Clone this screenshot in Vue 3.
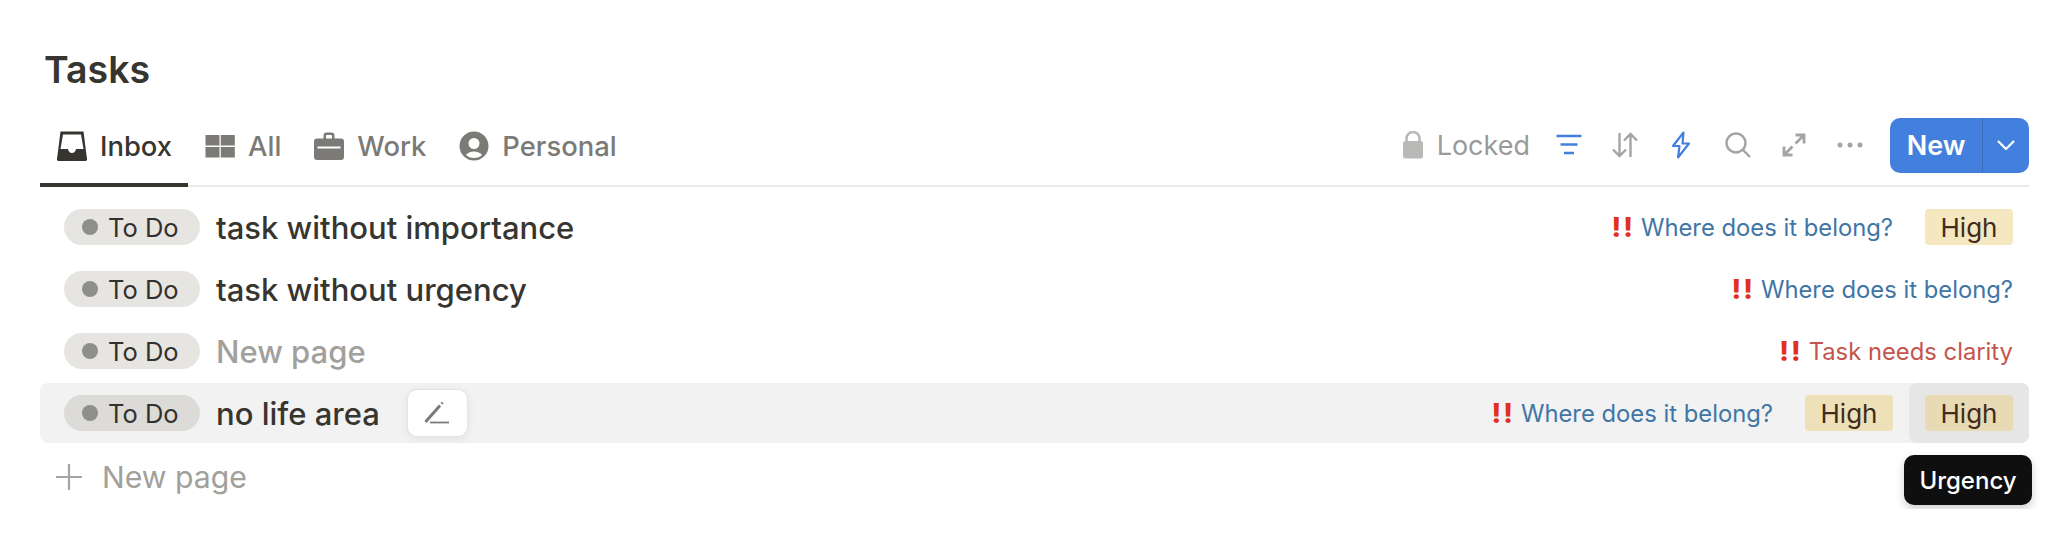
<template>
  <div class="page">
    <h1 class="title">Tasks</h1>

    <div class="toolbar">
      <div class="tabs">
        <div v-for="tab in tabs" :key="tab.name" class="tab" :class="{ active: tab.active }">
          <svg class="tab-icon" viewBox="0 0 30 30" v-html="tab.icon"></svg>
          <span>{{ tab.name }}</span>
        </div>
      </div>

      <div class="actions">
        <div class="locked">
          <svg class="lock-icon" viewBox="0 0 20 28">
            <path d="M3.5 11V7.5a6.5 6.5 0 0 1 13 0V11" fill="none" stroke="#b9b9b7" stroke-width="2.6" />
            <rect x="0" y="10" width="20" height="17.5" rx="2.5" fill="#b9b9b7" />
          </svg>
          <span>Locked</span>
        </div>
        <svg class="act filter" viewBox="0 0 26 22" stroke="#4380dd" stroke-width="2.6" fill="none">
          <path d="M0.5 2h25M4.5 10.5h17M8 19h10" />
        </svg>
        <svg class="act sort" viewBox="0 0 26 26" stroke="#a5a4a0" stroke-width="2.4" fill="none">
          <path d="M7.5 1v23M1 17.5l6.5 6.5 6.5-6.5M18.5 25V2M12 8.5L18.5 2 25 8.5" />
        </svg>
        <svg class="act bolt" viewBox="0 0 20 28" stroke="#4380dd" stroke-width="2.2" fill="none" stroke-linejoin="round">
          <path d="M12.5 1.5L2 15h6.5l-1.500 11.500L18 12.500h-6.500z" />
        </svg>
        <svg class="act search" viewBox="0 0 26 26" stroke="#a5a4a0" stroke-width="2.4" fill="none">
          <circle cx="11" cy="11" r="9.500" />
          <path d="M18 18l7 7" />
        </svg>
        <svg class="act expand" viewBox="0 0 24 24" stroke="#a5a4a0" stroke-width="2.8" fill="none">
          <path d="M13.500 2h8.500v8.500M22 2L13.500 10.500M2 13.500V22h8.500M2 22l8.500-8.500" />
        </svg>
        <svg class="act more" viewBox="0 0 26 6" fill="#a5a4a0">
          <circle cx="3" cy="3" r="2.500" /><circle cx="13" cy="3" r="2.500" /><circle cx="23" cy="3" r="2.500" />
        </svg>
        <div class="new-btn">
          <span class="new-label">New</span>
          <span class="new-caret">
            <svg viewBox="0 0 18 10" width="18" height="10" fill="none" stroke="#fff" stroke-width="2.200">
              <path d="M1 1l8 8 8-8" />
            </svg>
          </span>
        </div>
      </div>
    </div>

    <div class="rows">
      <div v-for="row in rows" :key="row.id" class="row" :class="{ hovered: row.hovered }">
        <div class="pill"><i class="dot"></i>To Do</div>
        <span class="name" :class="{ empty: row.empty }">{{ row.name }}</span>
        <button v-if="row.hovered" class="edit">
          <svg viewBox="0 0 26 22" width="26" height="22" fill="none" stroke="#7b7a77">
            <path d="M1.500 20L16 3.500" stroke-width="3" />
            <path d="M17.500 1.700l1.200-1.200" stroke-width="2.600" />
            <path d="M6 20.500h19" stroke-width="1.800" />
          </svg>
        </button>
        <div class="cells">
          <div v-if="row.formula" class="cell formula" :class="row.tone">
            <span class="bang">!!</span> {{ row.formula }}
          </div>
          <div v-if="row.importance" class="cell"><span class="tag">High</span></div>
          <div v-if="row.urgency" class="cell last"><span class="tag">High</span></div>
        </div>
        <div v-if="row.hovered" class="tooltip">Urgency</div>
      </div>
      <div class="add-row">
        <svg viewBox="0 0 28 28" width="28" height="28" stroke="#a5a4a0" stroke-width="2.200" fill="none">
          <path d="M14 1v26M1 14h26" />
        </svg>
        <span>New page</span>
      </div>
    </div>
  </div>
</template>

<script setup>
const tabs = [
  {
    name: 'Inbox',
    active: true,
    icon: '<path fill-rule="evenodd" fill="currentColor" d="M3.500 0.500h23L30 28a1.800 1.800 0 0 1-2 2H2a1.800 1.800 0 0 1-2-2zM6 3.500 3.500 18H11c.5 2.500 2 4 4 4s3.500-1.500 4-4h7.500L24 3.500z"/>',
  },
  {
    name: 'All',
    icon: '<path fill="currentColor" d="M0.500 4h14v10.500h-14zM15.800 4h14v10.500h-14zM0.500 16h14v10.500h-14zM15.800 16h14v10.500h-14z"/>',
  },
  {
    name: 'Work',
    icon: '<path fill="currentColor" fill-rule="evenodd" d="M9.500 7.500V4.500a3 3 0 0 1 3-3h5a3 3 0 0 1 3 3v3h6.500a3 3 0 0 1 3 3V26a3 3 0 0 1-3 3H3a3 3 0 0 1-3-3V10.500a3 3 0 0 1 3-3zM12 7.500h6V5a1 1 0 0 0-1-1h-4a1 1 0 0 0-1 1z"/><rect x="3.500" y="15.500" width="23" height="2" fill="#fff"/>',
  },
  {
    name: 'Personal',
    icon: '<path fill="currentColor" fill-rule="evenodd" d="M15 0.500a14.500 14.500 0 1 1 0 29 14.500 14.500 0 0 1 0-29zM15 7a5.500 5.500 0 1 0 0 11 5.500 5.500 0 0 0 0-11zM15 20.500c-3.500 0-6.500 1.300-8 3.500 2 2 4.800 3 8 3s6-1 8-3c-1.500-2.200-4.500-3.500-8-3.500z"/>',
  },
]

const rows = [
  { id: 1, name: 'task without importance', formula: 'Where does it belong?', tone: 'blue', urgency: true },
  { id: 2, name: 'task without urgency', formula: 'Where does it belong?', tone: 'blue' },
  { id: 3, name: 'New page', empty: true, formula: 'Task needs clarity', tone: 'red' },
  { id: 4, name: 'no life area', hovered: true, formula: 'Where does it belong?', tone: 'blue', importance: true, urgency: true },
]
</script>

<style>
html,
body {
  background: #fff;
}
</style>

<style scoped>
.page {
  padding: 49px 35px 0 40px;
  font-family: Inter, "Liberation Sans", sans-serif;
  color: #37352f;
}

.title {
  margin: 0 0 0 4px;
  font-size: 37.5px;
  line-height: 42px;
  font-weight: 600;
}

.toolbar {
  display: flex;
  justify-content: space-between;
  align-items: flex-end;
  margin-top: 24px;
  border-bottom: 2px solid #e9e9e7;
  height: 70px;
}

.tabs {
  display: flex;
  height: 70px;
  align-self: flex-end;
}

.tab {
  display: flex;
  align-items: center;
  gap: 13px;
  padding: 0 16px 6px 17px;
  margin-bottom: -2px;
  border-bottom: 4px solid transparent;
  color: #7b7a76;
  font-size: 27.4px;
  font-weight: 500;
}

.tab.active {
  color: #37352f;
  border-bottom-color: #37352f;
}

.tab-icon {
  width: 30px;
  height: 30px;
}

.actions {
  display: flex;
  align-items: center;
  height: 70px;
  padding-bottom: 10px;
  box-sizing: border-box;
}

.locked {
  display: flex;
  align-items: center;
  gap: 14px;
  color: #9b9a97;
  font-size: 27px;
}

.lock-icon {
  width: 20px;
  height: 28px;
}

.act {
  flex: none;
}

.filter {
  width: 26px;
  height: 22px;
  margin-left: 26px;
}

.sort {
  width: 26px;
  height: 26px;
  margin-left: 30px;
}

.bolt {
  width: 20px;
  height: 28px;
  margin-left: 33px;
}

.search {
  width: 26px;
  height: 26px;
  margin-left: 34px;
}

.expand {
  width: 24px;
  height: 24px;
  margin-left: 31px;
}

.more {
  width: 26px;
  height: 6px;
  margin-left: 31px;
}

.new-btn {
  display: flex;
  align-items: stretch;
  height: 55px;
  width: 139px;
  margin-left: 27px;
  border-radius: 10px;
  background: #4380dd;
  color: #fff;
  font-size: 27px;
  font-weight: 600;
}

.new-label {
  flex: 1;
  display: flex;
  align-items: center;
  justify-content: center;
  border-right: 1px solid #3a6fc0;
}

.new-caret {
  width: 46px;
  display: flex;
  align-items: center;
  justify-content: center;
}

.rows {
  margin-top: 10px;
  display: flex;
  flex-direction: column;
  gap: 2px;
}

.row {
  position: relative;
  display: flex;
  align-items: center;
  height: 60px;
  padding-left: 24px;
  border-radius: 8px;
}

.row.hovered {
  background: #f2f2f2;
}

.pill {
  display: flex;
  align-items: center;
  gap: 10px;
  box-sizing: border-box;
  width: 136px;
  height: 36px;
  padding-left: 18px;
  border-radius: 18px;
  background: #e6e5e1;
  color: #32302c;
  font-size: 25.5px;
}

.row.hovered .pill {
  background: #dcdbd8;
}

.dot {
  width: 16px;
  height: 16px;
  border-radius: 50%;
  background: #8e8e8b;
}

.name {
  margin-left: 16px;
  font-size: 31px;
  font-weight: 500;
}

.name.empty {
  color: #a1a09c;
}

.edit {
  display: flex;
  align-items: center;
  justify-content: center;
  width: 61px;
  height: 48px;
  margin-left: 27px;
  padding: 0;
  background: #fff;
  border: 1px solid #e3e3e1;
  border-radius: 10px;
  box-shadow: 0 2px 8px rgba(15, 15, 15, 0.07);
}

.cells {
  margin-left: auto;
  display: flex;
  height: 100%;
}

.cell {
  display: flex;
  align-items: center;
  padding: 0 16px;
  border-radius: 8px;
  font-size: 23.8px;
}

.row.hovered .cell.last {
  background: #e6e6e6;
}

.formula {
  gap: 6px;
  white-space: nowrap;
}

.formula.blue {
  color: #3f76a6;
}

.formula.red {
  color: #c4554d;
}

.bang {
  color: #e0301e;
  font-size: 27px;
  font-weight: 800;
  letter-spacing: 2px;
}

.tag {
  display: flex;
  align-items: center;
  justify-content: center;
  width: 88px;
  height: 36px;
  border-radius: 4px;
  background: #f5e7c0;
  color: #402c1b;
  font-size: 26px;
}

.row.hovered .tag {
  background: #eee0b9;
}

.row.hovered .last .tag {
  background: #e8dab4;
}

.tooltip {
  position: absolute;
  top: 72px;
  right: -3px;
  width: 128px;
  height: 50px;
  display: flex;
  align-items: center;
  justify-content: center;
  border-radius: 10px;
  background: #0f0f0f;
  color: #fff;
  font-size: 24px;
  font-weight: 500;
  box-shadow: 0 4px 10px rgba(15, 15, 15, 0.2);
}

.add-row {
  display: flex;
  align-items: center;
  gap: 19px;
  height: 64px;
  padding-left: 15px;
  color: #a1a09c;
  font-size: 30.2px;
  font-weight: 400;
}
</style>
